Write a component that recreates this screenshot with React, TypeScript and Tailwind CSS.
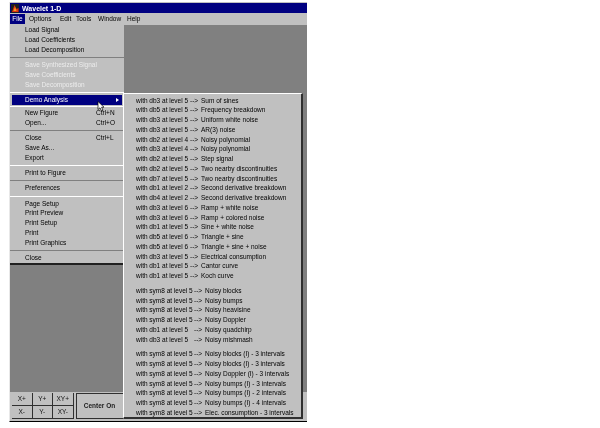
import React from "react";

type Row = { t: string; k?: string; dis?: boolean };

const groups: { rows: Row[]; sep: string }[] = [
  { rows: [{ t: "Load Signal" }, { t: "Load Coefficients" }, { t: "Load Decomposition" }], sep: "bg-[#808080]" },
  { rows: [{ t: "Save Synthesized Signal", dis: true }, { t: "Save Coefficients", dis: true }, { t: "Save Decomposition", dis: true }], sep: "bg-white" },
];
const groupsAfter: { rows: Row[]; sep: string }[] = [
  { rows: [{ t: "New Figure", k: "Ctrl+N" }, { t: "Open...", k: "Ctrl+O" }], sep: "bg-[#808080]" },
  { rows: [{ t: "Close", k: "Ctrl+L" }, { t: "Save As..." }, { t: "Export" }], sep: "bg-white" },
  { rows: [{ t: "Print to Figure" }], sep: "bg-[#808080]" },
  { rows: [{ t: "Preferences" }], sep: "bg-white" },
  { rows: [{ t: "Page Setup" }, { t: "Print Preview" }, { t: "Print Setup" }, { t: "Print" }, { t: "Print Graphics" }], sep: "bg-[#808080]" },
  { rows: [{ t: "Close" }], sep: "" },
];

const demo1: [string, string][] = [
  ["with db3 at level 5", "Sum of sines"],
  ["with db5 at level 5", "Frequency breakdown"],
  ["with db3 at level 5", "Uniform white noise"],
  ["with db3 at level 5", "AR(3) noise"],
  ["with db2 at level 4", "Noisy polynomial"],
  ["with db3 at level 4", "Noisy polynomial"],
  ["with db2 at level 5", "Step signal"],
  ["with db2 at level 5", "Two nearby discontinuities"],
  ["with db7 at level 5", "Two nearby discontinuities"],
  ["with db1 at level 2", "Second derivative breakdown"],
  ["with db4 at level 2", "Second derivative breakdown"],
  ["with db3 at level 6", "Ramp + white noise"],
  ["with db3 at level 6", "Ramp + colored noise"],
  ["with db1 at level 5", "Sine + white noise"],
  ["with db5 at level 6", "Triangle + sine"],
  ["with db5 at level 6", "Triangle + sine + noise"],
  ["with db3 at level 5", "Electrical consumption"],
  ["with db1 at level 5", "Cantor curve"],
  ["with db1 at level 5", "Koch curve"],
];
const demo2: [string, string][] = [
  ["with sym8 at level 5", "Noisy blocks"],
  ["with sym8 at level 5", "Noisy bumps"],
  ["with sym8 at level 5", "Noisy heavisine"],
  ["with sym8 at level 5", "Noisy Doppler"],
  ["with db1 at level 5", "Noisy quadchirp"],
  ["with db3 at level 5", "Noisy mishmash"],
];
const demo3: [string, string][] = [
  ["with sym8 at level 5", "Noisy blocks (I) - 3 intervals"],
  ["with sym8 at level 5", "Noisy blocks (I) - 3 intervals"],
  ["with sym8 at level 5", "Noisy Doppler (I) - 3 intervals"],
  ["with sym8 at level 5", "Noisy bumps (I) - 3 intervals"],
  ["with sym8 at level 5", "Noisy bumps (I) - 2 intervals"],
  ["with sym8 at level 5", "Noisy bumps (I) - 4 intervals"],
  ["with sym8 at level 5", "Elec. consumption - 3 intervals"],
];

function MenuRow({ r }: { r: Row }) {
  return (
    <div className={`flex h-[9.75px] items-center pl-[15px] ${r.dis ? "text-[#ececec]" : "text-[#000]"}`}>
      <span className="w-[71px] whitespace-nowrap">{r.t}</span>
      {r.k && <span className="whitespace-nowrap">{r.k}</span>}
    </div>
  );
}

function Group({ g }: { g: { rows: Row[]; sep: string } }) {
  return (
    <>
      <div>
        {g.rows.map((r, i) => (
          <MenuRow key={i} r={r} />
        ))}
      </div>
      {g.sep && (
        <div className="flex h-[5.5px] items-center">
          <div className={`h-px w-full ${g.sep}`} />
        </div>
      )}
    </>
  );
}

function DemoRows({ rows, wide }: { rows: [string, string][]; wide?: boolean }) {
  return (
    <div>
      {rows.map(([a, b], i) => (
        <div key={i} className="flex h-[9.75px] items-center whitespace-nowrap pl-[12px] text-[#000]">
          <span className={wide ? "w-[58px]" : "w-[54px]"}>{a}</span>
          <span className="w-[11px]">{"-->"}</span>
          <span>{b}</span>
        </div>
      ))}
    </div>
  );
}

function Btn({ children }: { children: React.ReactNode }) {
  return (
    <div className="flex h-[13px] w-[20.5px] items-center justify-center border-b border-r border-b-[#303030] border-r-[#303030] bg-[#c0c0c0] text-[#111]">
      {children}
    </div>
  );
}

export default function App() {
  return (
    <div className="h-[428px] w-[600px] overflow-hidden bg-white pl-[9px] pt-[2px] font-['Liberation_Sans',Arial,sans-serif] text-[6.5px] leading-none">
      <div className="relative flex h-[420px] w-[298px] flex-col border-b border-l border-b-black border-l-[#e8e8e8] bg-[#c0c0c0]">
        <div className="mt-px flex h-[10px] shrink-0 items-center gap-[2px] bg-[#000080] pl-px text-[7px] font-bold text-white">
          <svg width="8" height="9" viewBox="0 0 8 9" className="shrink-0">
            <rect width="8" height="9" fill="#202020" />
            <path d="M1 8 L3.5 1 L5.5 5 L7.5 4 L7.5 8 Z" fill="#e03010" />
            <path d="M2.5 7 L4 3 L5.5 7 Z" fill="#f0a020" />
          </svg>
          <span className="ml-[1px] blur-[0.4px]">Wavelet 1-D</span>
        </div>

        <div className="flex h-[12px] shrink-0 items-center text-[6.5px] text-[#000]">
          <div className="flex h-[10px] w-[15px] items-center justify-center bg-[#000080] text-white blur-[0.2px]">File</div>
          <span className="ml-[4px] w-[31px] blur-[0.4px]">Options</span>
          <span className="w-[16px] blur-[0.4px]">Edit</span>
          <span className="w-[22px] blur-[0.4px]">Tools</span>
          <span className="w-[29px] blur-[0.4px]">Window</span>
          <span className="blur-[0.4px]">Help</span>
        </div>

        <div className="relative flex-1 bg-[#808080]" />

        <div className="flex h-[29px] shrink-0 items-start gap-[2px] bg-[#c0c0c0] pl-[2px] pt-px">
          <div className="grid grid-cols-3 blur-[0.4px]">
            {["X+", "Y+", "XY+", "X-", "Y-", "XY-"].map((b) => (
              <Btn key={b}>{b}</Btn>
            ))}
          </div>
          <div className="flex h-[26px] w-[60px] items-center justify-center border border-[#303030] bg-[#c0c0c0] pr-[12px] font-bold text-[#222] blur-[0.3px]">
            Center On
          </div>
        </div>

        {/* File menu */}
        <div className="absolute left-0 top-[23px] z-10 w-[114px] border-b-2 border-b-[#202020] bg-[#c0c0c0] pt-[0.7px] blur-[0.4px]">
          {groups.map((g, i) => (
            <Group key={i} g={g} />
          ))}
          <div className="mx-[2px] flex h-[10px] items-center justify-between bg-[#000080] pl-[13px] pr-[3px] text-white">
            <span>Demo Analysis</span>
            <span className="h-0 w-0 border-y-[2.5px] border-l-[3px] border-y-transparent border-l-white" />
          </div>
          <div className="flex h-[3.5px] items-center">
            <div className="h-px w-full bg-white" />
          </div>
          {groupsAfter.map((g, i) => (
            <Group key={i} g={g} />
          ))}
        </div>

        {/* Demo submenu */}
        <div className="absolute left-[113px] top-[91px] z-20 flex h-[326px] w-[180px] flex-col border-b-2 border-r-2 border-b-[#303030] border-r-[#303030] border-l border-t border-l-white border-t-white bg-[#c0c0c0] pt-[2px] blur-[0.4px]">
          <DemoRows rows={demo1} />
          <div className="my-[2.5px] h-px bg-white" />
          <DemoRows rows={demo2} wide />
          <div className="my-[2.5px] h-px bg-white" />
          <DemoRows rows={demo3} wide />
        </div>

        {/* Pointer */}
        <svg width="8" height="11" viewBox="0 0 8 11" className="absolute left-[87px] top-[99px] z-30">
          <path d="M1 0.5 L1 8.5 L3 6.8 L4.5 10 L6 9.3 L4.6 6.3 L7 6.2 Z" fill="#fff" stroke="#000" strokeWidth="0.7" />
        </svg>
      </div>
    </div>
  );
}
